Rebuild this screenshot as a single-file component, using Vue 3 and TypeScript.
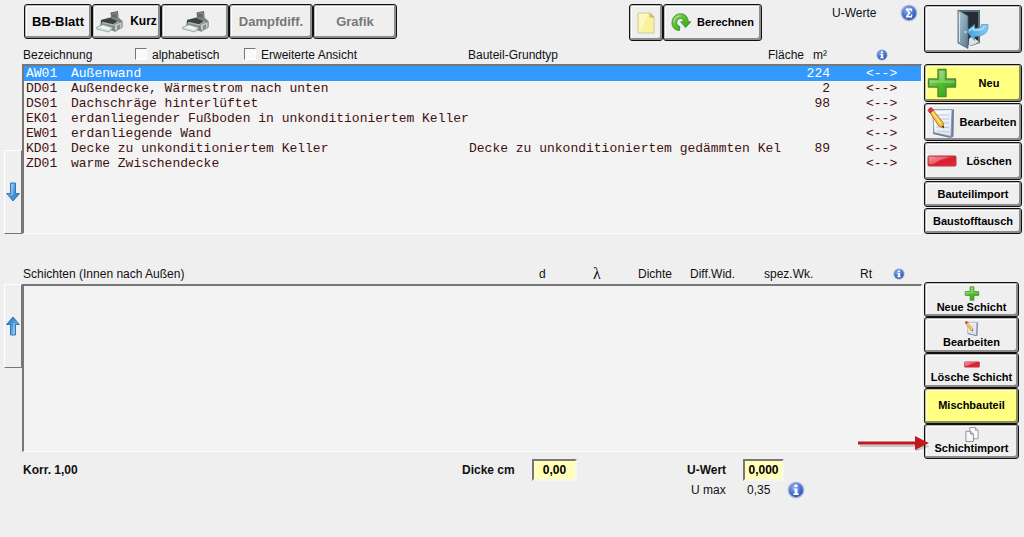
<script setup lang="ts">
import { ref } from 'vue'

interface Component {
  code: string
  name: string
  type?: string
  area?: number
}

const components: Component[] = [
  { code: 'AW01', name: 'Außenwand', area: 224 },
  { code: 'DD01', name: 'Außendecke, Wärmestrom nach unten', area: 2 },
  { code: 'DS01', name: 'Dachschräge hinterlüftet', area: 98 },
  { code: 'EK01', name: 'erdanliegender Fußboden in unkonditioniertem Keller' },
  { code: 'EW01', name: 'erdanliegende Wand' },
  { code: 'KD01', name: 'Decke zu unkonditioniertem Keller', type: 'Decke zu unkonditioniertem gedämmten Kel', area: 89 },
  { code: 'ZD01', name: 'warme Zwischendecke' },
]

const selected = ref('AW01')
const alphabetical = ref(false)
const extended = ref(false)
const thickness = ref('0,00')
const uValue = ref('0,000')
</script>

<template>
  <main class="page">
    <svg class="sprite" aria-hidden="true">
      <defs>
        <linearGradient id="g-green" x1="0" y1="0" x2="1" y2="1">
          <stop offset="0" stop-color="#a5d080" />
          <stop offset=".45" stop-color="#55c02c" />
          <stop offset="1" stop-color="#2aa012" />
        </linearGradient>
        <linearGradient id="g-red" x1="0" y1="0" x2="1" y2="1">
          <stop offset="0" stop-color="#ee8088" />
          <stop offset=".5" stop-color="#dc1f30" />
          <stop offset="1" stop-color="#e02a3a" />
        </linearGradient>
        <linearGradient id="g-arrow" x1="0" y1="0" x2="1" y2="1">
          <stop offset="0" stop-color="#8ccdf5" />
          <stop offset="1" stop-color="#1c6fc4" />
        </linearGradient>
        <radialGradient id="g-ball" cx=".4" cy=".3" r=".75">
          <stop offset="0" stop-color="#8fb2f2" />
          <stop offset=".6" stop-color="#4870d0" />
          <stop offset="1" stop-color="#2f50a8" />
        </radialGradient>
        <linearGradient id="g-door" x1="0" y1="0" x2="1" y2="1">
          <stop offset="0" stop-color="#b4c8d3" />
          <stop offset=".5" stop-color="#86a3b6" />
          <stop offset="1" stop-color="#5b788c" />
        </linearGradient>
        <linearGradient id="g-swoosh" x1="0" y1="0" x2="1" y2="0">
          <stop offset="0" stop-color="#3f9fdc" />
          <stop offset="1" stop-color="#8ccbee" />
        </linearGradient>
        <linearGradient id="g-paper" x1="0" y1="0" x2="1" y2="1">
          <stop offset="0" stop-color="#ffffff" />
          <stop offset="1" stop-color="#dbe4ef" />
        </linearGradient>
      </defs>
      <symbol id="i-plus" viewBox="0 0 30 30">
        <path d="M11 1.500h8v9.500h9.500v8H19v9.500h-8V19H1.500v-8H11z" fill="url(#g-green)" stroke="#4a8a3a" stroke-width="1.400" stroke-linejoin="round" />
        <path d="M12.500 3h5v9.500h10v2.500H3v-2.500h9.500z" fill="#fff" opacity=".25" />
      </symbol>
      <symbol id="i-minus" viewBox="0 0 30 12">
        <rect x="1" y="1" width="28" height="10" rx="1" fill="url(#g-red)" stroke="#b83a45" />
        <path d="M2 2h22Q14 4 10 7T2 9z" fill="#fff" opacity=".25" />
      </symbol>
      <symbol id="i-note" viewBox="0 0 28 31">
        <path d="M7 2.500h20l-.5 27-3 1.500L6 27z" fill="#6b7f9c" />
        <path d="M5.500 3l19.500-.5-1 27L7 25.500z" fill="url(#g-paper)" stroke="#8492a8" stroke-width=".8" />
        <path d="M10 8h12M11 12h11M12 16h10M9 20l13 .5M10 24l12 1" stroke="#bcc8da" />
        <path d="M2.500 5L6 3l10 12.500.8 5.500-5-2z" fill="#f5bb31" stroke="#a56b13" stroke-width=".8" />
        <path d="M5 4.500l9 12.500" stroke="#ffe78c" stroke-width="1.300" />
        <path d="M1 3.500Q2 .5 4.500.7L6.500 3 3 6z" fill="#df3340" stroke="#a4202a" stroke-width=".7" />
        <path d="M14.800 19.500l2 1.500-.3-2.500z" fill="#222" />
      </symbol>
      <symbol id="i-printer" viewBox="0 0 27 24">
        <path d="M14.500 2.500L22 1l.8 9-7 3z" fill="#646a68" />
        <path d="M16 4l5-1 .8 6" fill="none" stroke="#8a908d" />
        <path d="M5 10l10-3 8 1 3.500 3v6L19 21.500 4 17z" fill="#7c8481" />
        <path d="M5 10l9-2 7 3-3 4-13-2z" fill="#3c4240" />
        <path d="M6 12.500l11 2.500 6-3" fill="none" stroke="#b5bcb8" stroke-width="1.500" />
        <path d="M18 14.500l8-3v6l-7 4z" fill="#c3cac6" stroke="#6c736f" stroke-width=".6" />
        <path d="M21 15.500l3-1v4l-3 1.500z" fill="#858e89" />
        <path d="M1 17l6-2.500 10 3-4 4.500L.5 19z" fill="#d3dfdf" stroke="#7b8989" stroke-width=".6" />
        <path d="M3 17l4-1 7 2-2 2z" fill="#f2f8f8" />
      </symbol>
      <symbol id="i-sheet" viewBox="0 0 18 22">
        <path d="M1 1h12l4 4v16H1z" fill="#f8f29b" stroke="#d0cca0" />
        <path d="M2 2h9l-7 17H2z" fill="#fffbd2" opacity=".7" />
        <path d="M13 1v4h4z" fill="#d7ce73" stroke="#b2aa65" stroke-width=".7" />
      </symbol>
      <symbol id="i-refresh" viewBox="0 0 20 19">
        <path d="M8.500 17.500C3.500 17.500.8 13.800 1 9.500 1.300 4 5 .8 9.700.8c4.500 0 7.300 3.200 7.600 8h2.500l-5.200 5.700-5-5.700h2.900c-.2-2.200-1.200-3.300-3-3.300-2.200 0-3.800 1.700-3.800 4 0 2.100 1.100 3.300 3.100 3.800z" fill="url(#g-green)" stroke="#2c8a20" stroke-width=".8" />
        <path d="M3 9c0-4 3-6.200 6.700-6.200" fill="none" stroke="#b8eca0" />
      </symbol>
      <symbol id="i-exit" viewBox="0 0 32 40">
        <path d="M1 1h22v33l-9 3L1 32z" fill="#566d7a" />
        <path d="M4 3h17v28l-9 3z" fill="#262c30" />
        <path d="M12 30l3-3 7 6-4 2-6 2z" fill="#dfe2e3" />
        <path d="M1 1l10 6v32.500L1 34z" fill="url(#g-door)" stroke="#4b616d" stroke-width=".8" />
        <path d="M2.500 4v29" stroke="#d9e5eb" />
        <circle cx="8.500" cy="23" r="1" fill="#e5edf1" />
        <path d="M9.500 22l8-6.500v3.700q7 .8 7-3.700h6.500q1.500 11.500-13.500 12v4z" fill="url(#g-swoosh)" stroke="#4a9dcb" stroke-width=".7" />
        <path d="M12 22l4.500-3.500v2.500q9 1 11-4" fill="none" stroke="#c4e8fa" stroke-width="1.200" />
      </symbol>
      <symbol id="i-down" viewBox="0 0 14 20">
        <path d="M4.500 1h5v10.500h4L7 19 .7 11.500h3.800z" fill="url(#g-arrow)" stroke="#2a6bb0" stroke-width=".9" stroke-linejoin="round" />
        <path d="M6 2v11" stroke="#c3e6fb" opacity=".7" />
      </symbol>
      <symbol id="i-info" viewBox="0 0 20 20">
        <circle cx="10" cy="10" r="9.500" fill="#b5bfda" />
        <circle cx="10" cy="10" r="8" fill="url(#g-ball)" />
        <path d="M8.300 4h3.400v2.600H8.300zM7.300 8.200h4.400v5.600h1.500v1.700H7v-1.700h1.500V9.800H7.300z" fill="#fff" />
      </symbol>
      <symbol id="i-sum" viewBox="0 0 20 20">
        <circle cx="10" cy="10" r="9.500" fill="#b5bfda" />
        <circle cx="10" cy="10" r="8" fill="url(#g-ball)" />
        <path d="M6.500 5h7v3h-1.300l-.6-1.300H9.300l2.500 3.200-2.700 3.400h2.800l.7-1.500h1.200L13.300 15H6.500v-1.200l3-3.800-3-3.800z" fill="#fff" />
      </symbol>
      <symbol id="i-copy" viewBox="0 0 14 16">
        <path d="M4.500.5h6l3 3v9h-9z" fill="#fbfbfb" stroke="#999" />
        <path d="M10.500.5v3h3" fill="none" stroke="#999" />
        <path d="M.5 4.500h5l3 3v8h-8z" fill="#f6f7f9" stroke="#858a92" />
        <path d="M5.500 4.500v3h3" fill="none" stroke="#858a92" />
      </symbol>
    </svg>

    <header class="top">
      <div class="toolbar">
        <div class="group">
          <button class="btn large sheet-btn">BB-Blatt</button>
          <button class="btn short-btn"><svg class="printer"><use href="#i-printer" /></svg>Kurz</button>
          <button class="btn print-btn" aria-label="Drucken"><svg class="printer"><use href="#i-printer" /></svg></button>
          <button class="btn large wide" disabled>Dampfdiff.</button>
          <button class="btn large wide" disabled>Grafik</button>
        </div>
        <div class="group calc">
          <button class="btn new-sheet" aria-label="Neues Blatt"><svg class="sheet"><use href="#i-sheet" /></svg></button>
          <button class="btn compute"><svg class="refresh"><use href="#i-refresh" /></svg>Berechnen</button>
        </div>
        <div class="values">U-Werte<svg class="ball"><use href="#i-sum" /></svg></div>
      </div>
      <div class="headings">
        <div class="options">
          <span class="title">Bezeichnung</span>
          <label class="first"><input v-model="alphabetical" type="checkbox">alphabetisch</label>
          <label><input v-model="extended" type="checkbox">Erweiterte Ansicht</label>
        </div>
        <span>Bauteil-Grundtyp</span>
        <span class="area-head"><span>Fläche</span><span>m²</span></span>
        <svg class="dot"><use href="#i-info" /></svg>
      </div>
    </header>
    <div class="exit">
      <button class="btn" aria-label="Schließen"><svg><use href="#i-exit" /></svg></button>
    </div>

    <button class="mover down" aria-label="Nach unten"><svg><use href="#i-down" /></svg></button>
    <section class="list">
      <table aria-label="Bauteile">
        <colgroup><col class="c-code"><col><col class="c-type"><col class="c-area"><col class="c-link"></colgroup>
        <tbody>
          <tr v-for="c in components" :key="c.code" :class="{ active: c.code === selected }" @click="selected = c.code">
            <td>{{ c.code }}</td>
            <td>{{ c.name }}</td>
            <td>{{ c.type }}</td>
            <td class="num">{{ c.area }}</td>
            <td class="link">&lt;--&gt;</td>
          </tr>
        </tbody>
      </table>
    </section>
    <nav class="actions" aria-label="Bauteil">
      <button class="btn yellow tall"><svg class="big-plus"><use href="#i-plus" /></svg><span>Neu</span></button>
      <button class="btn tall"><svg class="big-note"><use href="#i-note" /></svg><span>Bearbeiten</span></button>
      <button class="btn tall"><svg class="big-minus"><use href="#i-minus" /></svg><span>Löschen</span></button>
      <button class="btn low">Bauteilimport</button>
      <button class="btn low">Baustofftausch</button>
    </nav>

    <div class="layer-headings">
      <span>Schichten (Innen nach Außen)</span>
      <span>d</span>
      <span class="lambda">λ</span>
      <span>Dichte</span>
      <span>Diff.Wid.</span>
      <span>spez.Wk.</span>
      <span>Rt</span>
      <svg class="dot"><use href="#i-info" /></svg>
    </div>

    <button class="mover up" aria-label="Nach oben"><svg><use href="#i-down" /></svg></button>
    <section class="list layers" aria-label="Schichten"></section>
    <nav class="layer-actions" aria-label="Schicht">
      <button class="btn"><svg class="small-plus"><use href="#i-plus" /></svg>Neue Schicht</button>
      <button class="btn"><svg class="small-note"><use href="#i-note" /></svg>Bearbeiten</button>
      <button class="btn"><svg class="small-minus"><use href="#i-minus" /></svg>Lösche Schicht</button>
      <button class="btn yellow">Mischbauteil</button>
      <button class="btn"><svg class="copy"><use href="#i-copy" /></svg>Schichtimport</button>
      <svg class="pointer" viewBox="0 0 74 18" aria-hidden="true">
        <path d="M3 10.500h56v-4l14 6-14 5v-4.500H3z" fill="#000" opacity=".18" />
        <path d="M1 7.500h57V2l14 7-14 7v-5.500H1z" fill="#c01a20" />
      </svg>
    </nav>

    <footer class="summary">
      <span>Korr. 1,00</span>
      <label for="thickness">Dicke cm</label>
      <input id="thickness" v-model="thickness" class="thick">
      <label for="uvalue">U-Wert</label>
      <input id="uvalue" v-model="uValue" class="u-input">
      <span class="max-label">U max</span>
      <span class="max-value">0,35<svg class="ball"><use href="#i-info" /></svg></span>
    </footer>
  </main>
</template>

<style>
body {
  margin: 0;
  background: #efefef;
}
</style>

<style scoped>
.page {
  display: grid;
  grid-template-columns: 22px minmax(0, 1fr) 102px;
  min-height: 100vh;
  box-sizing: border-box;
  align-content: start;
  background: #efefef;
  color: #111;
  font: 12px/16px "Liberation Sans", Arial, sans-serif;
}
.page * {
  box-sizing: border-box;
}
.sprite {
  position: absolute;
  width: 0;
  height: 0;
}
svg {
  display: block;
  flex: none;
}
.btn {
  display: flex;
  align-items: center;
  justify-content: center;
  padding: 0;
  border: 1px solid #111;
  border-radius: 3px;
  background: #efefef;
  box-shadow: inset 1px 1px #bbb, inset -2px -2px #8c8c8c, inset 2px 2px #fff;
  color: #000;
  font: bold 11px/13px "Liberation Sans", Arial, sans-serif;
  white-space: nowrap;
}
.btn.large {
  font-size: 13px;
}
.btn:disabled {
  color: #777;
}
.btn.yellow {
  background: #ffff80;
  box-shadow: inset 1px 1px #c4c388, inset -2px -2px #8c8b5c, inset 2px 2px #ffffd8;
}

.top {
  grid-column: 1 / 3;
  padding-left: 24px;
}
.toolbar {
  display: flex;
  align-items: flex-start;
  padding-top: 4px;
  height: 46px;
}
.group {
  display: flex;
}
.group .btn {
  height: 35px;
}
.sheet-btn {
  width: 68px;
}
.short-btn {
  width: 69px;
  gap: 7px;
}
.group .short-btn {
  font-size: 12px;
}
.print-btn {
  width: 68px;
}
.wide {
  width: 84px;
}
.printer {
  width: 27px;
  height: 24px;
}
.calc {
  margin-left: auto;
}
.calc .btn {
  height: 37px;
}
.new-sheet {
  width: 34px;
}
.compute {
  width: 99px;
  gap: 6px;
}
.sheet {
  width: 18px;
  height: 22px;
}
.refresh {
  width: 20px;
  height: 19px;
}
.values {
  display: flex;
  align-items: center;
  justify-content: space-between;
  width: 86px;
  margin: 0 4px 0 70px;
}
.ball {
  width: 18px;
  height: 18px;
}
.dot {
  width: 12px;
  height: 12px;
}
.headings {
  display: grid;
  grid-template-columns: minmax(0, 1fr) 300px 108px 46px;
  align-items: center;
  height: 18px;
  margin-left: -1px;
}
.options,
.options label {
  display: flex;
  align-items: center;
}
.title {
  width: 112px;
}
.options .first {
  width: 109px;
}
.options input {
  appearance: none;
  width: 12px;
  height: 12px;
  margin: 0 5px 2px 0;
  border: 1px solid;
  border-color: #777 #fff #fff #777;
  background: #fafafa;
}
.options input:checked {
  background: #3399ff;
}
.area-head {
  display: flex;
  gap: 9px;
}
.exit {
  padding: 5px 2px 0;
}
.exit .btn {
  width: 100%;
  height: 48px;
}
.exit svg {
  width: 32px;
  height: 40px;
}

.mover {
  display: flex;
  align-items: center;
  justify-content: center;
  width: 18px;
  height: 84px;
  margin-left: 4px;
  padding: 0;
  border: 1px solid;
  border-color: #fff #777 #777 #fff;
  background: #efefef;
}
.mover svg {
  width: 14px;
  height: 20px;
}
.down {
  align-self: end;
}
.up {
  margin-top: 2px;
}
.up svg {
  transform: rotate(180deg);
}
.list {
  min-width: 0;
  border: 1px solid;
  border-color: #777 #fff #fff #777;
  border-width: 2px 1px 1px 2px;
  background: #f3f3f3;
}
.list table {
  width: 100%;
  table-layout: fixed;
  border-collapse: collapse;
  color: #421010;
  font: 13px/15px "Liberation Mono", "Courier New", monospace;
}
.list td {
  height: 15px;
  padding: 0;
  white-space: nowrap;
}
.list td:first-child {
  padding-left: 2px;
}
.c-code {
  width: 47px;
}
.c-type {
  width: 322px;
}
.c-area {
  width: 39px;
}
.c-link {
  width: 91px;
}
.list .num {
  text-align: right;
}
.list .link {
  padding-left: 36px;
}
.list .active {
  background: #3399ff;
  color: #fff;
}
.actions {
  display: grid;
  gap: 1px;
  padding: 0 2px;
}
.tall {
  height: 38px;
}
.actions .tall {
  justify-content: flex-start;
  padding-left: 2px;
}
.tall span {
  flex: 1;
  text-align: center;
}
.low {
  height: 26px;
}
.big-plus {
  width: 30px;
  height: 30px;
}
.big-note {
  width: 28px;
  height: 31px;
}
.big-minus {
  width: 30px;
  height: 12px;
}

.layer-headings {
  grid-column: 1 / 4;
  display: grid;
  grid-template-columns: minmax(0, 1fr) 54px 45px 52px 74px 96px 33px 131px;
  align-items: center;
  height: 48px;
  padding: 32px 0 0 23px;
}
.lambda {
  font: 16px/16px "Liberation Serif", "Times New Roman", serif;
}
.layers {
  min-height: 168px;
  margin: 2px 0 7px;
}
.layer-actions {
  position: relative;
  display: grid;
  grid-auto-rows: 1fr;
  padding: 0 5px 0 2px;
}
.layer-actions .btn {
  flex-direction: column;
  min-height: 35px;
}
.small-plus {
  width: 16px;
  height: 15px;
}
.small-note {
  width: 15px;
  height: 15px;
}
.small-minus {
  width: 16px;
  height: 7px;
  margin: 5px 0 3px;
}
.copy {
  width: 14px;
  height: 15px;
}
.pointer {
  position: absolute;
  right: 93px;
  bottom: 7px;
  width: 74px;
  height: 18px;
}

.summary {
  grid-column: 1 / 4;
  display: grid;
  grid-template-columns: minmax(0, 1fr) 70px 155px 56px 281px;
  align-items: center;
  padding-left: 23px;
  font-weight: bold;
}
.summary input {
  height: 22px;
  padding: 0;
  border: 2px solid;
  border-color: #777 #f5f5f5 #f5f5f5 #777;
  background: #ffffb8;
  color: #000;
  font: bold 12px/16px "Liberation Sans", Arial, sans-serif;
  text-align: center;
}
.thick {
  width: 45px;
}
.u-input {
  width: 41px;
}
.max-label {
  grid-column: 4;
  padding-left: 4px;
  font-weight: normal;
}
.max-value {
  display: flex;
  align-items: center;
  gap: 17px;
  padding-left: 4px;
  font-weight: normal;
}
</style>
